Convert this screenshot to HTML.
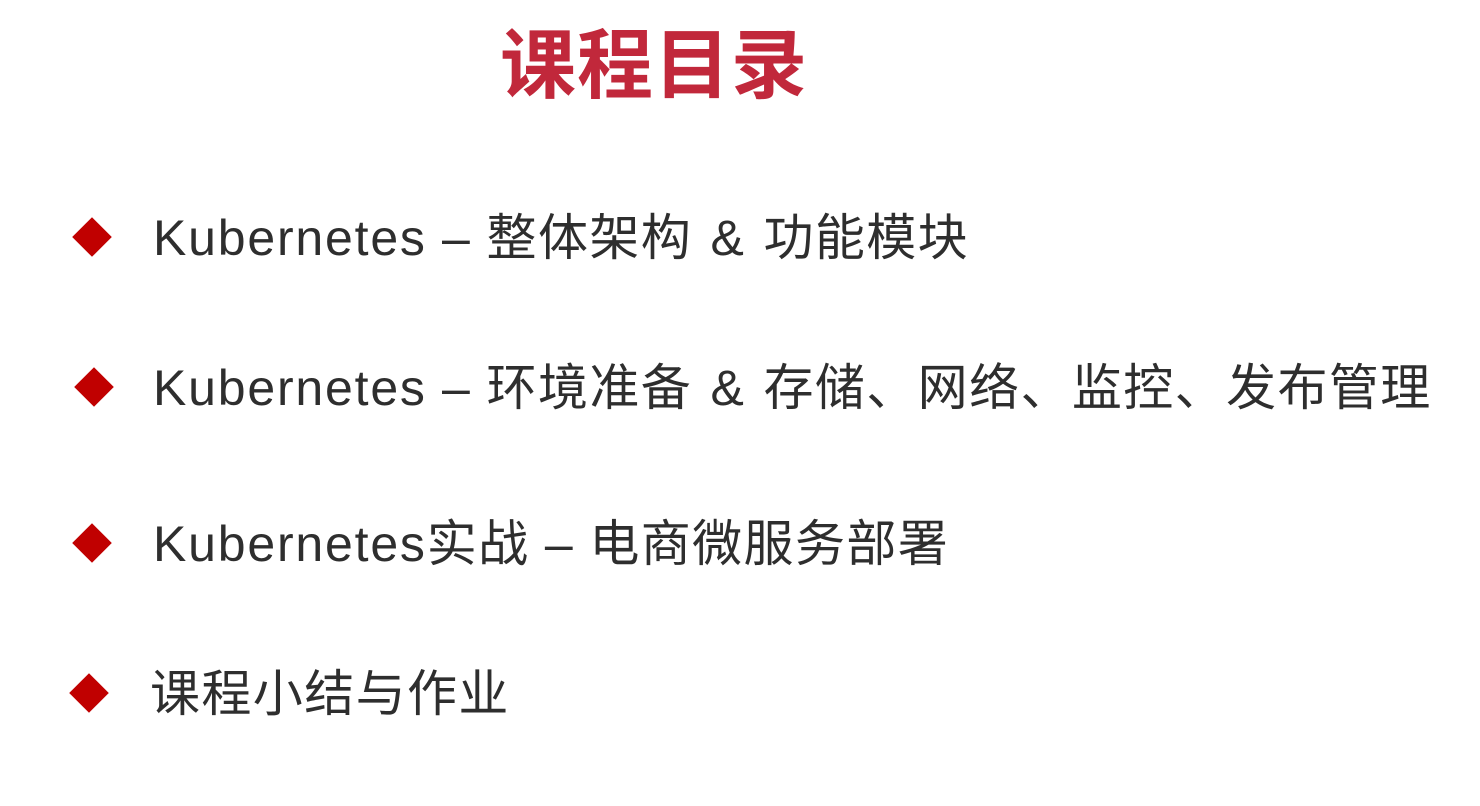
<!DOCTYPE html>
<html><head><meta charset="utf-8"><style>
body{margin:0;width:1480px;height:806px;background:#fff;overflow:hidden;position:relative;font-family:"Liberation Sans","Noto Sans CJK SC",sans-serif}
.t{position:absolute;left:500px;top:24px;font-size:76px;line-height:86px;font-weight:bold;color:#c1283b;white-space:nowrap;letter-spacing:1px}
.l{position:absolute;font-size:50px;line-height:60px;color:#2e2e2e;white-space:nowrap;letter-spacing:1.4px}
.l .k{letter-spacing:1.8px}
.a{margin:0 3px}
.d{position:absolute;width:28px;height:28px;background:#c00000;transform:rotate(45deg)}
</style></head><body>
<div class="t">课程目录</div>
<div class="d" style="left:78px;top:223px"></div>
<div class="l" style="left:153px;top:208px"><span class="k">Kubernetes</span> – 整体架构 <span class="a">&amp;</span> 功能模块</div>
<div class="d" style="left:80px;top:373px"></div>
<div class="l" style="left:153px;top:358px"><span class="k">Kubernetes</span> – 环境准备 <span class="a">&amp;</span> 存储、网络、监控、发布管理</div>
<div class="d" style="left:78px;top:529px"></div>
<div class="l" style="left:153px;top:514px"><span class="k">Kubernetes</span>实战 – 电商微服务部署</div>
<div class="d" style="left:75px;top:679px"></div>
<div class="l" style="left:150px;top:664px">课程小结与作业</div>
</body></html>
